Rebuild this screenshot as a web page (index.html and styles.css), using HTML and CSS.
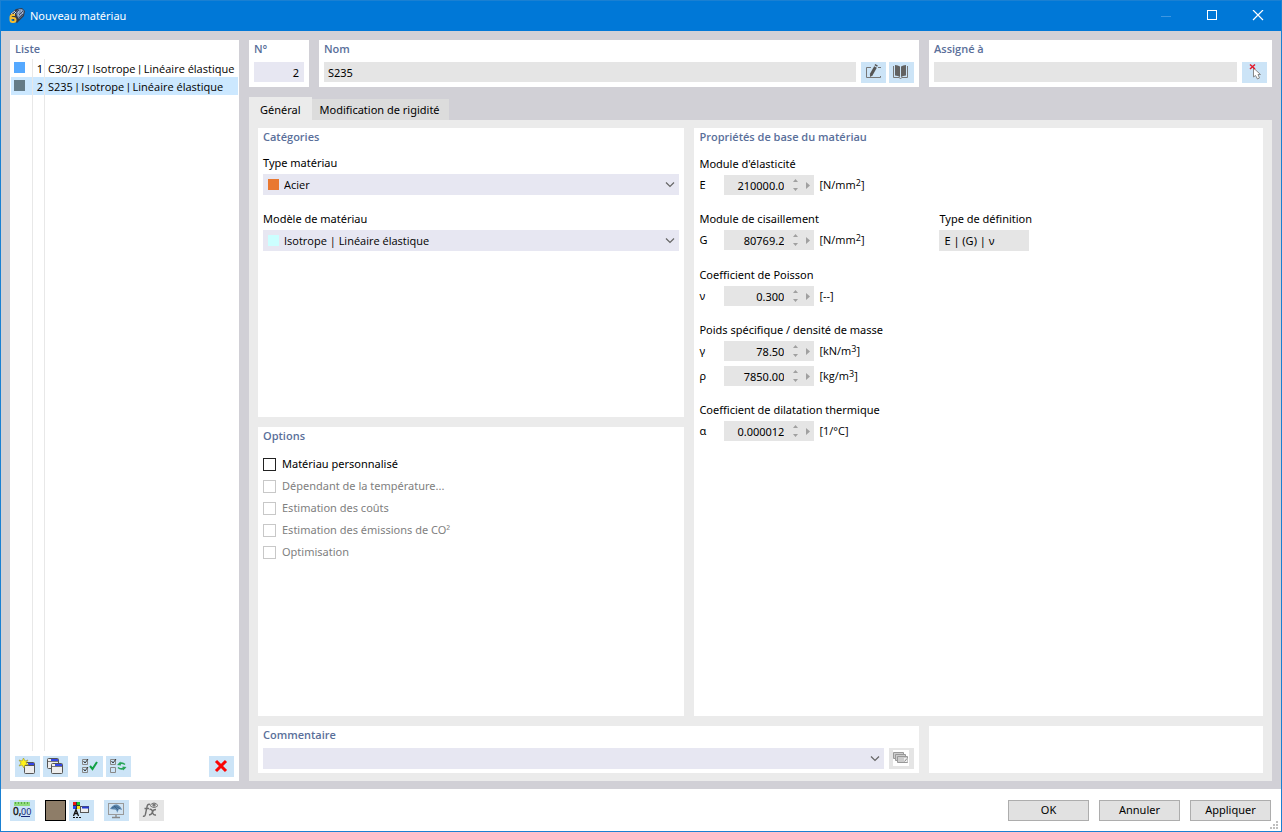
FILE: index.html
```html
<!DOCTYPE html>
<html lang="fr">
<head>
<meta charset="utf-8">
<title>Nouveau matériau</title>
<link rel="stylesheet" href="styles.css">
</head>
<body>
<div class="window">
  <header class="titlebar">
    <svg class="app-icon" width="18" height="18" viewBox="0 0 18 18">
      <path d="M2 7 L8 2 L14 1 L17 4 L16 9 L9 16 L5 13 Z" fill="#353b48"/>
      <path d="M8 5 L11 2 L14 2 L16 4 L15 8 L11 12 L9 9 Z" fill="#7d92b4"/>
      <path d="M3 7 L7 4 M5 8 L8 5 M10 5 h1 M13 4 h1 M12 7 h1 M14 6 h1 M10 8 h1" stroke="#c9d6ea" fill="none"/>
      <path d="M8 6 L11 3 M11 8 L15 4 M11 11 L15 7" stroke="#3d4c66" fill="none"/>
      <path d="M7 8 H4.500 Q2.500 8 2.500 10.500 V13 Q2.500 15 4.500 15 H5.500 Q7.500 15 7.500 13 Q7.500 11 5.500 11 H3" fill="none" stroke="#f3bd31" stroke-width="2"/>
    </svg>
    <h1 class="title">Nouveau matériau</h1>
    <div class="caption-buttons">
      <button class="caption" aria-label="Réduire" disabled><svg width="12" height="12"><path d="M1 6.500 H11" stroke="#3d97e2"/></svg></button>
      <button class="caption" aria-label="Agrandir"><svg width="12" height="12"><rect x="1.500" y="0.500" width="9" height="9" fill="none" stroke="#fff"/></svg></button>
      <button class="caption" aria-label="Fermer"><svg width="12" height="12"><path d="M1 0 L11 10 M11 0 L1 10" stroke="#fff" stroke-width="1.200"/></svg></button>
    </div>
  </header>

  <main class="workspace">
    <section class="panel list-panel">
      <h2 class="heading">Liste</h2>
      <ul class="materials" role="listbox" aria-label="Liste">
        <li class="material" role="option"><span class="swatch blue"></span><span class="num">1</span><span class="name">C30/37 <span class="bar">|</span> Isotrope <span class="bar">|</span> Linéaire élastique</span></li>
        <li class="material selected" role="option" aria-selected="true"><span class="swatch slate"></span><span class="num">2</span><span class="name">S235 <span class="bar">|</span> Isotrope <span class="bar">|</span> Linéaire élastique</span></li>
      </ul>
      <div class="list-tools">
        <button class="tool" aria-label="Nouveau">
          <svg width="25" height="21">
            <rect x="9.500" y="6.500" width="10" height="11" rx="1" fill="#ededed" stroke="#555"/>
            <path d="M13 8 H19" stroke="#3447e8" stroke-width="2"/><path d="M10 9.500 H19" stroke="#555"/>
            <path d="M8.500 2 L10 5 L13 4 L11 7 L13.500 9 L10 9 L9 12 L7 9 L4 10 L6 7 L4 4 L7 5 Z" fill="#fff21a" stroke="#96912b" stroke-width=".6"/>
          </svg>
        </button>
        <button class="tool" aria-label="Copier">
          <svg width="25" height="21">
            <rect x="4.500" y="2.500" width="11" height="10" rx="1" fill="#ededed" stroke="#555"/>
            <path d="M8 4 H15" stroke="#3447e8" stroke-width="2"/><path d="M5 5.500 H15" stroke="#777"/>
            <rect x="8.500" y="7.500" width="11" height="10" rx="1" fill="#ededed" stroke="#555"/>
            <path d="M12 9 H19" stroke="#3447e8" stroke-width="2"/><path d="M9 10.500 H19" stroke="#777"/>
          </svg>
        </button>
        <button class="tool gap-before" aria-label="Tout sélectionner">
          <svg width="25" height="21" fill="none">
            <path d="M4.500 3.500 h5 v5 h-5 z M4.500 11.500 h5 v5 h-5 z" stroke="#888"/>
            <path d="M5.500 5 l1.500 2 l3 -4 M5.500 13 l1.500 2 l3 -4" stroke="#333"/>
            <path d="M12 10 L14.500 13 L19 6" stroke="#11a146" stroke-width="2"/>
          </svg>
        </button>
        <button class="tool" aria-label="Inverser la sélection">
          <svg width="25" height="21" fill="none">
            <path d="M4.500 3.500 h5 v5 h-5 z M4.500 11.500 h5 v5 h-5 z" stroke="#888"/>
            <path d="M5.500 5 l1.500 2 l3 -4" stroke="#333"/>
            <path d="M13 8 Q16 6 19 8.500 M19 12 Q15 14 12 11.500" stroke="#27a558" stroke-width="1.600"/>
            <path d="M11 9 L14.500 5.500 L15 9.500 Z M20.500 11 L17 14.500 L16.500 10.500 Z" fill="#27a558"/>
          </svg>
        </button>
        <button class="tool push" aria-label="Supprimer">
          <svg width="25" height="21"><path d="M7 5 L17 15 M17 5 L7 15" stroke="#fa0505" stroke-width="3"/></svg>
        </button>
      </div>
    </section>

    <div class="editor">
      <div class="identity">
        <section class="panel">
          <label class="heading" for="no">N°</label>
          <div class="line"><input id="no" class="field active right" value="2"></div>
        </section>
        <section class="panel">
          <label class="heading" for="nom">Nom</label>
          <div class="line">
            <input id="nom" class="field" value="S235">
            <div class="pair">
              <button class="tool" aria-label="Modifier">
                <svg width="25" height="21" fill="none">
                  <path d="M10 5.500 H5.500 V15.500 H19.500 V14 M17 5.500 H20" stroke="#777"/>
                  <path d="M10 13 L14.500 5" stroke="#555" stroke-width="3"/><path d="M14.800 4 L15.500 2.700" stroke="#555" stroke-width="3"/><path d="M9 15 L9 12 L11.500 13.500 Z" fill="#555"/>
                </svg>
              </button>
              <button class="tool" aria-label="Bibliothèque">
                <svg width="25" height="21">
                  <path d="M6 3 Q9 3 11 4.500 V15 Q9 13.500 6 13.500 Z M17 3 Q14 3 12 4.500 V15 Q14 13.500 17 13.500 Z" fill="#626262"/>
                  <path d="M4.500 4 V15.500 H10 L11.500 16.500 L13 15.500 H18.500 V4" fill="none" stroke="#777"/>
                </svg>
              </button>
            </div>
          </div>
        </section>
        <section class="panel">
          <label class="heading" for="assigned">Assigné à</label>
          <div class="line">
            <input id="assigned" class="field" readonly>
            <button class="tool" aria-label="Sélectionner">
              <svg width="25" height="21">
                <path d="M11.500 6 V15 L13.500 13.500 L15.500 17 L17.500 16 L16 12.500 H18.500 Z" fill="#fff" stroke="#888"/>
                <path d="M8 2.500 L13 7 M13 2.500 L8 7" stroke="#e3182b" stroke-width="1.500"/>
              </svg>
            </button>
          </div>
        </section>
      </div>

      <nav class="tabs" role="tablist">
        <button class="tab current" role="tab" aria-selected="true">Général</button>
        <button class="tab" role="tab">Modification de rigidité</button>
      </nav>

      <div class="page">
        <div class="columns">
          <div class="stack">
            <section class="panel">
              <h2 class="heading">Catégories</h2>
              <label class="caption-label first" for="type">Type matériau</label>
              <div class="dropdown">
                <select id="type" class="select with-swatch"><option>Acier</option></select>
                <span class="swatch inside orange"></span>
                <svg class="chevron" width="10" height="6"><path d="M1 0.500 L5 4.500 L9 0.500" fill="none" stroke="#666" stroke-width="1.200"/></svg>
              </div>
              <label class="caption-label second" for="model">Modèle de matériau</label>
              <div class="dropdown">
                <select id="model" class="select with-swatch"><option>Isotrope | Linéaire élastique</option></select>
                <span class="swatch inside cyan"></span>
                <svg class="chevron" width="10" height="6"><path d="M1 0.500 L5 4.500 L9 0.500" fill="none" stroke="#666" stroke-width="1.200"/></svg>
              </div>
            </section>
            <section class="panel">
              <h2 class="heading">Options</h2>
              <div class="options">
                <label class="option"><input type="checkbox" class="check">Matériau personnalisé</label>
                <label class="option off"><input type="checkbox" class="check" disabled>Dépendant de la température...</label>
                <label class="option off"><input type="checkbox" class="check" disabled>Estimation des coûts</label>
                <label class="option off"><input type="checkbox" class="check" disabled>Estimation des émissions de CO²</label>
                <label class="option off"><input type="checkbox" class="check" disabled>Optimisation</label>
              </div>
            </section>
          </div>

          <section class="panel">
            <h2 class="heading">Propriétés de base du matériau</h2>
            <div class="properties">
              <div class="group">
                <h3 class="caption-label">Module d'élasticité</h3>
                <div class="quantity"><label class="symbol" for="e">E</label><div class="spin"><input id="e" class="spin-value" value="210000.0" readonly><svg width="22" height="12"><path d="M1 3 L3.500 0 L6 3 Z M1 9 L3.500 12 L6 9 Z M14 3 L18 6.500 L14 10 Z" fill="#a0a0a0"/></svg></div><span class="unit">[N/mm<sup>2</sup>]</span></div>
              </div>
              <div class="group-row">
                <div class="group">
                  <h3 class="caption-label">Module de cisaillement</h3>
                  <div class="quantity"><label class="symbol" for="g">G</label><div class="spin"><input id="g" class="spin-value" value="80769.2" readonly><svg width="22" height="12"><path d="M1 3 L3.500 0 L6 3 Z M1 9 L3.500 12 L6 9 Z M14 3 L18 6.500 L14 10 Z" fill="#a0a0a0"/></svg></div><span class="unit">[N/mm<sup>2</sup>]</span></div>
                </div>
                <div class="group">
                  <label class="caption-label" for="def">Type de définition</label>
                  <input id="def" class="field definition" value="E | (G) | ν" readonly>
                </div>
              </div>
              <div class="group">
                <h3 class="caption-label">Coefficient de Poisson</h3>
                <div class="quantity"><label class="symbol" for="nu">ν</label><div class="spin"><input id="nu" class="spin-value" value="0.300" readonly><svg width="22" height="12"><path d="M1 3 L3.500 0 L6 3 Z M1 9 L3.500 12 L6 9 Z M14 3 L18 6.500 L14 10 Z" fill="#a0a0a0"/></svg></div><span class="unit">[--]</span></div>
              </div>
              <div class="group">
                <h3 class="caption-label">Poids spécifique / densité de masse</h3>
                <div class="quantity"><label class="symbol" for="gamma">γ</label><div class="spin"><input id="gamma" class="spin-value" value="78.50" readonly><svg width="22" height="12"><path d="M1 3 L3.500 0 L6 3 Z M1 9 L3.500 12 L6 9 Z M14 3 L18 6.500 L14 10 Z" fill="#a0a0a0"/></svg></div><span class="unit">[kN/m<sup>3</sup>]</span></div>
                <div class="quantity"><label class="symbol" for="rho">ρ</label><div class="spin"><input id="rho" class="spin-value" value="7850.00" readonly><svg width="22" height="12"><path d="M1 3 L3.500 0 L6 3 Z M1 9 L3.500 12 L6 9 Z M14 3 L18 6.500 L14 10 Z" fill="#a0a0a0"/></svg></div><span class="unit">[kg/m<sup>3</sup>]</span></div>
              </div>
              <div class="group">
                <h3 class="caption-label">Coefficient de dilatation thermique</h3>
                <div class="quantity"><label class="symbol" for="alpha">α</label><div class="spin"><input id="alpha" class="spin-value" value="0.000012" readonly><svg width="22" height="12"><path d="M1 3 L3.500 0 L6 3 Z M1 9 L3.500 12 L6 9 Z M14 3 L18 6.500 L14 10 Z" fill="#a0a0a0"/></svg></div><span class="unit">[1/°C]</span></div>
              </div>
            </div>
          </section>
        </div>

        <div class="bottom">
          <section class="panel">
            <label class="heading" for="comment">Commentaire</label>
            <div class="line">
              <div class="dropdown">
                <select id="comment" class="select"><option></option></select>
                <svg class="chevron" width="10" height="6"><path d="M1 0.500 L5 4.500 L9 0.500" fill="none" stroke="#666" stroke-width="1.200"/></svg>
              </div>
              <button class="tool disabled" aria-label="Commentaires" disabled>
                <svg width="25" height="21">
                  <rect x="4" y="2" width="16" height="16" fill="#fff"/>
                  <path d="M4.500 4.500 h10 v6 h-10 z" fill="#ccc" stroke="#999"/>
                  <path d="M6.500 6.500 h10 v6 h-10 z" fill="#ccc" stroke="#999"/>
                  <path d="M8.500 8.500 h10 v6 h-10 z" fill="#ccc" stroke="#999"/>
                  <path d="M15 10 h3.500 v4 h-3.500 z" fill="#eee"/><path d="M15.500 13.500 L18 10.500" fill="none" stroke="#888"/>
                </svg>
              </button>
            </div>
          </section>
          <section class="panel"></section>
        </div>
      </div>
    </div>
  </main>

  <footer class="footer">
    <button class="tool" aria-label="Unités">
      <svg width="25" height="21">
        <rect x="4" y="2" width="16" height="4" fill="#8fdb7c"/>
        <path d="M5.500 2 v2 M8.500 2 v2 M11.500 2 v2 M14.500 2 v2 M17.500 2 v2" stroke="#5aa848"/>
        <text x="3" y="15" font-size="10" fill="#111" stroke="#111" stroke-width=".3">0,</text><text x="11" y="15" font-size="9" fill="#16257a">00</text>
        <path d="M11 16.500 H20" stroke="#16257a"/>
      </svg>
    </button>
    <button class="color" aria-label="Couleur"></button>
    <button class="tool close" aria-label="Affichage">
      <svg width="25" height="21">
        <path d="M4 2 h7 v7 h-7 z" fill="#333"/>
        <path d="M4 2 h3 v3 h-3 z" fill="#f01515"/><path d="M8 2 h3 v3 h-3 z" fill="#18c42c"/><path d="M4 6 h3 v3 h-3 z" fill="#2746ee"/><path d="M8 6 h3 v3 h-3 z" fill="#f7e41c"/>
        <path d="M4.500 16 L7 9.500 L9.500 16 M5.500 13.500 H8.500" fill="none" stroke="#111" stroke-width="1.300"/>
        <path d="M4 17.500 H12" stroke="#111" stroke-dasharray="2 1"/>
        <rect x="11.500" y="6.500" width="8" height="6" fill="#ededed" stroke="#555"/><path d="M13 7.500 H20" stroke="#2438d0" stroke-width="2"/>
      </svg>
    </button>
    <button class="tool spaced" aria-label="Vue">
      <svg width="25" height="21">
        <rect x="4.500" y="3.500" width="15" height="11" fill="#cfe3f3" stroke="#999"/>
        <path d="M6 9 Q9 4 13 4.500 Q17 6 18 10 L15 9 L13 13 Q13 9 10 9.500 Z" fill="#5b86ad"/>
        <path d="M8 8 Q12 5 16 9 M10 6 L14 10" stroke="#34597c" fill="none" stroke-width=".7"/>
        <path d="M12 15 V17 M8 17.500 H16" stroke="#888" stroke-width="1.300"/>
      </svg>
    </button>
    <button class="tool disabled spaced" aria-label="Formule" disabled>
      <svg width="25" height="21" fill="none">
        <path d="M11 4.500 Q8.500 3.500 8 7 L6.500 14 Q6 17 4 16 M5.500 8.500 H10" stroke="#6f6f6f" stroke-width="1.400"/>
        <path d="M10.500 9.500 Q13 8.500 13.500 12 T17 15 M17 9.500 Q14 9.500 13.500 12 T10 15" stroke="#6f6f6f" stroke-width="1.400"/>
        <path d="M11 5.500 Q15 .5 19 5.500 Q15 9.500 11 5.500 Z" stroke="#777"/><circle cx="15" cy="5" r="1.700" fill="#777"/>
      </svg>
    </button>
    <div class="actions">
      <button class="action">OK</button>
      <button class="action">Annuler</button>
      <button class="action">Appliquer</button>
    </div>
    <svg class="grip" width="8" height="8"><path d="M6 0h2v2h-2z M3 3h2v2h-2z M6 3h2v2h-2z M0 6h2v2h-2z M3 6h2v2h-2z M6 6h2v2h-2z" fill="#bfbfbf"/></svg>
  </footer>
</div>
</body>
</html>
```
FILE: styles.css
```css
* { box-sizing: border-box; }
body, h1, h2, h3, ul { margin: 0; padding: 0; }
body, button, input, select { font: 11px/16px "Noto Sans", "Open Sans", sans-serif; color: #000; }
button, input, select { margin: 0; padding: 0; border: 0; border-radius: 0; }
svg { display: block; flex: none; }

.window { display: flex; flex-direction: column; min-height: 100vh; border: 1px solid #1a80d2; background: #fff; }
.titlebar { display: flex; align-items: center; height: 30px; padding-left: 7px; background: #0078d7; }
.title { margin-left: 4px; font-size: 11px; font-weight: 400; color: #fff; }
.caption-buttons { display: flex; margin-left: auto; }
.caption { display: flex; align-items: center; justify-content: center; width: 46px; height: 30px; background: none; }

.workspace { flex: 1; display: flex; gap: 10px; padding: 9px 9px 8px; background: #d1d0d6; }
.panel { padding: 0 5px; background: #fff; min-width: 0; }
.heading { display: block; padding-bottom: 1px; font-family: "Open Sans", sans-serif; font-size: 11px; font-weight: 600; line-height: 17px; color: #5a6f9a; }

.list-panel { display: flex; flex-direction: column; width: 229px; padding: 0; }
.list-panel .heading { padding-left: 5px; }
.materials { flex: 1; margin: 1px 1px 0; list-style: none; }
.materials, .material { background-image: linear-gradient(#e8e8e8, #e8e8e8), linear-gradient(#e8e8e8, #e8e8e8); background-size: 1px 100%; background-repeat: no-repeat; background-position: 21px 0, 33px 0; }
.material { display: grid; grid-template-columns: 21px 11px 1fr; align-items: start; height: 18px; line-height: 20px; white-space: nowrap; }
.material.selected { background-color: #cce8ff; }
.num { text-align: right; }
.name { padding-left: 5px; font-family: "Open Sans", sans-serif; }
.bar { font-family: Roboto, sans-serif; }
.swatch { width: 11px; height: 11px; margin: 3px 0 0 3px; }
.blue { background: #55a9ff; }
.slate { background: #647b87; }
.orange { background: #e97830; }
.cyan { background: #ccffff; }
.list-tools { display: flex; gap: 3px; padding: 5px 5px 4px; }
.tool { flex: none; width: 25px; height: 21px; background: #cce4f7; }
.tool.disabled { background: #e5e5e5; }
.gap-before { margin-left: 7px; }
.push { margin-left: auto; }

.editor { flex: 1; display: flex; flex-direction: column; min-width: 0; }
.identity { display: grid; grid-template-columns: 60px 1fr 343px; gap: 10px; }
.line { display: flex; gap: 5px; padding: 4px 0 4px; }
.identity .panel { height: 47px; }
.pair { display: flex; gap: 3px; }
.field { flex: 1; width: 100%; min-width: 0; height: 20px; padding: 1px 4px 0; background: #e5e5e5; }
.field.active { background: #e7e7f2; }
.field.right { padding-right: 5px; text-align: right; }

.tabs { display: flex; align-items: flex-end; margin-top: 10px; }
.tab { height: 21px; padding: 0 9px 0 8px; background: #dcdcdc; }
.tab.current { height: 23px; padding: 2px 11px 0; background: #ebebeb; }
.page { flex: 1; display: flex; flex-direction: column; gap: 10px; padding: 8px 9px; background: #ebebeb; }
.columns { flex: 1; display: grid; grid-template-columns: 3fr 4fr; gap: 10px; }
.stack { display: grid; grid-template-rows: 1fr 1fr; gap: 10px; }
.caption-label { display: block; font-size: 11px; font-weight: 400; line-height: 20px; padding-bottom: 1px; }
.caption-label.first { margin-top: 7px; }
.caption-label.second { margin-top: 14px; }
.dropdown { position: relative; flex: 1; }
.select { display: block; appearance: none; width: 100%; height: 21px; background: #e7e7f2; }
.select.with-swatch { padding-left: 21px; font-family: "Open Sans", sans-serif; }
.inside { position: absolute; left: 2px; top: 2px; }
.chevron { position: absolute; right: 4px; top: 8px; pointer-events: none; }

.options { display: flex; flex-direction: column; gap: 2px; padding-top: 9px; }
.option { display: flex; align-items: center; gap: 6px; height: 20px; }
.option.off { color: #808080; }
.check { appearance: none; width: 13px; height: 13px; border: 1px solid #222; background: #fff; }
.check:disabled { border-color: #c8c8c8; }

.properties { display: flex; flex-direction: column; gap: 14px; padding-top: 8px; }
.group-row { display: grid; grid-template-columns: 240px 90px; }
.group-row .group { white-space: nowrap; }
.quantity { display: flex; align-items: center; height: 20px; }
.quantity + .quantity { margin-top: 5px; }
.symbol { width: 25px; }
.spin { display: flex; align-items: center; width: 90px; height: 20px; background: #e5e5e5; }
.spin-value { flex: 1; min-width: 0; padding: 1px 8px 0 0; background: none; text-align: right; }
.unit { padding-left: 5px; font-family: "Open Sans", sans-serif; white-space: nowrap; }
.unit sup { font-size: 9px; line-height: 0; vertical-align: 3px; }
.definition { display: block; height: 21px; padding: 0 5px; }

.bottom { display: grid; grid-template-columns: 1fr 334px; gap: 10px; height: 47px; }

.footer { position: relative; display: flex; align-items: center; height: 42px; padding: 0 10px 0 9px; }
.color { width: 21px; height: 21px; margin-left: 10px; border: 1px solid #000; background: #8e7d68; }
.close { margin-left: 3px; }
.spaced { margin-left: 10px; }
.actions { display: flex; gap: 10px; margin-left: auto; }
.action { width: 81px; height: 21px; border: 1px solid #adadad; background: #e1e1e1; }
.grip { position: absolute; right: 3px; bottom: 2px; }
```
